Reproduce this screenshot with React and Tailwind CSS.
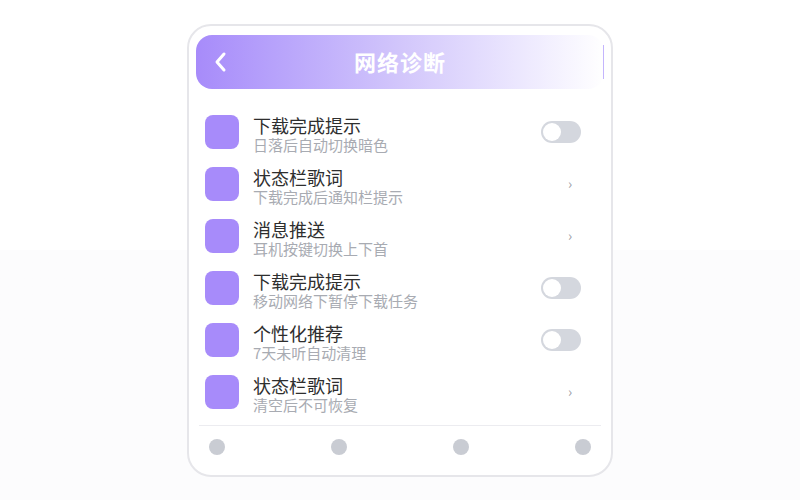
import React from 'react';

const rows = [
  { title: '下载完成提示', sub: '日落后自动切换暗色', kind: 'toggle' },
  { title: '状态栏歌词', sub: '下载完成后通知栏提示', kind: 'arrow' },
  { title: '消息推送', sub: '耳机按键切换上下首', kind: 'arrow' },
  { title: '下载完成提示', sub: '移动网络下暂停下载任务', kind: 'toggle' },
  { title: '个性化推荐', sub: '7天未听自动清理', kind: 'toggle' },
  { title: '状态栏歌词', sub: '清空后不可恢复', kind: 'arrow' },
];

function Toggle() {
  return (
    <div className="w-[40px] h-[22px] rounded-full bg-[#d4d7de] p-[2px] flex items-center">
      <div className="w-[18px] h-[18px] rounded-full bg-white" />
    </div>
  );
}

export default function App() {
  return (
    <div
      className="w-[800px] h-[500px] flex items-center justify-center bg-gradient-to-b from-white from-50% to-[#fcfcfd] to-50%"
      style={{ fontFamily: '"Noto Sans CJK SC", "Noto Sans", sans-serif' }}
    >
      <div className="w-[426px] h-[453px] bg-white border-2 border-[#e6e6ea] rounded-[24px] pt-[9px] px-[7px] flex flex-col">
        <div className="h-[54px] rounded-[16px] bg-gradient-to-r from-[#a78bfa] via-[#d2c6fb] to-white flex items-center relative">
          <svg className="absolute left-[17px]" width="16" height="22" viewBox="0 0 16 22" fill="none">
            <path d="M11 3L4 11l7 8" stroke="white" strokeWidth="3" strokeLinecap="round" strokeLinejoin="round" />
          </svg>
          <div className="flex-1 text-center text-white text-[22px] font-bold tracking-[1px]">网络诊断</div>
          <span className="absolute right-0 top-[10px] bottom-[10px] w-px bg-[#c4b5fd]" />
        </div>

        <div className="mt-[17px] px-[2px]">
          {rows.map((r, i) => (
            <div key={i} className="h-[52px] flex items-center pl-[7px] pr-[21px]">
              <div className="w-[34px] h-[34px] rounded-[8px] bg-[#a78bfa]" />
              <div className="ml-[14px] mt-[7px] flex-1 flex flex-col">
                <span className="text-[18px] leading-[20px] text-[#2e2e2e]">{r.title}</span>
                <span className="text-[15px] leading-[20px] text-[#a8abb2]">{r.sub}</span>
              </div>
              {r.kind === 'toggle' ? (
                <Toggle />
              ) : (
                <div className="w-[40px] flex justify-center pl-[18px] text-[#9a9ca3] text-[14px]">›</div>
              )}
            </div>
          ))}
        </div>

        <div className="mt-[7px] mx-[3px] border-t border-[#ececf0]" />
        <div className="flex justify-between px-[13px] mt-[13px]">
          <div className="w-[16px] h-[16px] rounded-full bg-[#c9ccd3]" />
          <div className="w-[16px] h-[16px] rounded-full bg-[#c9ccd3]" />
          <div className="w-[16px] h-[16px] rounded-full bg-[#c9ccd3]" />
          <div className="w-[16px] h-[16px] rounded-full bg-[#c9ccd3]" />
        </div>
      </div>
    </div>
  );
}
